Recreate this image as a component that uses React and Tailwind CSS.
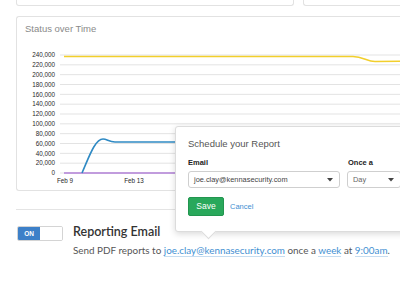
import React from 'react';

const yLabels = ['240,000', '220,000', '200,000', '180,000', '160,000', '140,000', '120,000', '100,000', '80,000', '60,000', '40,000', '20,000', '0'];

const StatusChart = () => {
  const top = 20;
  const step = 118 / 12;
  return (
    <svg width="400" height="155" className="block" style={{ fontFamily: '"Liberation Sans", Arial, sans-serif' }}>
      {yLabels.map((l, i) => (
        <g key={l}>
          <line x1="43" x2="400" y1={top + i * step} y2={top + i * step} stroke="#e3e3e3" strokeWidth="1" />
          <text x="38" y={top + i * step + 2.3} textAnchor="end" fontSize="6.3" fill="#1f1f1f">{l}</text>
        </g>
      ))}
      {/* yellow */}
      <path d="M47 21.5 L336 21.5 C346 21.5 350 26.5 358 26.5 L400 26" fill="none" stroke="#f2cf2c" strokeWidth="1.6" />
      {/* purple */}
      <line x1="47" x2="400" y1="138" y2="138" stroke="#b07fd6" strokeWidth="1.4" />
      {/* blue */}
      <path d="M65 138 C72 122 78 104 86 104 C90 104 92 107 98 107 L200 107" fill="none" stroke="#2f8ac4" strokeWidth="1.6" />
      <text x="48" y="147.5" textAnchor="middle" fontSize="6.3" fill="#1f1f1f">Feb 9</text>
      <text x="117" y="147.5" textAnchor="middle" fontSize="6.3" fill="#1f1f1f">Feb 13</text>
    </svg>
  );
};

const Caret = () => (
  <svg width="6" height="4" viewBox="0 0 6 4"><path d="M0 0 L6 0 L3 3.5 Z" fill="#444" /></svg>
);

export default function App() {
  return (
    <div className="relative w-[400px] h-[300px] overflow-hidden bg-white">
      {/* top cards */}
      <div className="flex gap-[9px] pl-[16px]">
        <div className="w-[288px] h-[6px] border border-t-0 border-[#e2e2e2] rounded-b-[3px]" />
        <div className="w-[100px] h-[6px] border border-t-0 border-r-0 border-[#e2e2e2] rounded-bl-[3px]" />
      </div>

      {/* chart card */}
      <div className="ml-[16px] mt-[10px] w-[400px] h-[175px] border border-r-0 border-[#e2e2e2] rounded-l-[3px]">
        <div className="pl-[8px] pt-[6px] h-[18px] text-[9.5px] leading-[12px] text-[#8a8a8a] font-['Liberation_Sans',Arial,sans-serif]">Status over Time</div>
        <StatusChart />
      </div>

      <div className="ml-[16px] mt-[18px] h-px bg-[#e4e4e4]" />

      {/* reporting row */}
      <div className="flex gap-[10px] pl-[17px] pt-[16px]">
        <div className="flex w-[46px] h-[15px] border border-[#d4d4d4] rounded-[2px] overflow-hidden">
          <div className="w-[22px] h-full bg-[#3d80c8] flex items-center justify-center text-[6.5px] font-bold text-white font-['Liberation_Sans',Arial,sans-serif]">ON</div>
          <div className="flex-1 bg-white" />
        </div>
        <div className="font-['Lato',sans-serif]">
          <div className="-mt-[2px] text-[12.5px] leading-[16px] font-semibold text-[#333]">Reporting Email</div>
          <div className="mt-[3px] text-[9.9px] leading-[14px] text-[#555] whitespace-nowrap">
            Send PDF reports to{' '}
            <span className="text-[#3f8fd2] border-b border-[#c6ddf1]">joe.clay@kennasecurity.com</span> once a{' '}
            <span className="text-[#3f8fd2] border-b border-[#c6ddf1]">week</span> at{' '}
            <span className="text-[#3f8fd2] border-b border-[#c6ddf1]">9:00am</span>.
          </div>
        </div>
      </div>

      {/* popup */}
      <div className="absolute left-[175px] top-[126px] w-[240px] h-[106px] bg-white border border-[#dcdcdc] rounded-[3px] shadow-[0_2px_6px_rgba(0,0,0,0.15)] font-['Liberation_Sans',Arial,sans-serif]">
        <div className="absolute left-[27px] bottom-[-6px] w-[11px] h-[11px] bg-white border-r border-b border-[#dcdcdc] rotate-45" />
        <div className="relative px-[12px] pt-[11px]">
          <div className="text-[9.5px] leading-[12px] text-[#555]">Schedule your Report</div>
          <div className="flex gap-[7px] mt-[8px]">
            <div className="w-[152px]">
              <div className="text-[7.5px] leading-[10px] font-bold text-[#222]">Email</div>
              <div className="mt-[3px] h-[17px] border border-[#cfcfcf] rounded-[3px] flex items-center justify-between pl-[5px] pr-[6px] text-[7.4px] text-[#444]">
                <span>joe.clay@kennasecurity.com</span>
                <Caret />
              </div>
            </div>
            <div className="w-[54px]">
              <div className="text-[7.5px] leading-[10px] font-bold text-[#222] pl-[1px]">Once a</div>
              <div className="mt-[3px] h-[17px] border border-[#cfcfcf] rounded-[3px] flex items-center justify-between pl-[5px] pr-[6px] text-[7.4px] text-[#666]">
                <span>Day</span>
                <Caret />
              </div>
            </div>
          </div>
          <div className="flex items-center gap-[6px] mt-[9px]">
            <div className="w-[36px] h-[19px] bg-[#29a85b] border border-[#22954f] rounded-[2px] flex items-center justify-center text-[8.5px] text-white">Save</div>
            <div className="text-[7.5px] text-[#3f8fd2]">Cancel</div>
          </div>
        </div>
      </div>
    </div>
  );
}
